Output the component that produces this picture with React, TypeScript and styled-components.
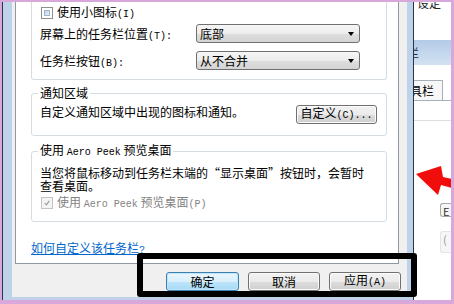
import * as React from 'react';
import styled, { createGlobalStyle } from 'styled-components';

const cjkFont = '"Noto Sans CJK SC", "Noto Sans", sans-serif';

const frameBlue = '#bed3ea';
const groupBorder = '#d5dde3';

const GlobalStyle = createGlobalStyle`
	html, body {
		margin: 0;
		padding: 0;
		background: #fff;
	}
	body {
		font-family: ${cjkFont};
		font-size: 12px;
		color: #000;
	}
`;

const Screen = styled.div`
	position: relative;
	box-sizing: border-box;
	width: 454px;
	height: 304px;
	display: flex;
	border-style: solid;
	border-color: #d8a8da;
	border-width: 2px 3px 4px 2px;
	overflow: hidden;
	background: #fff;
`;

const DialogWindow = styled.div`
	box-sizing: border-box;
	flex: none;
	width: 412px;
	display: flex;
	padding: 0 6px 3px 9px;
	background: ${frameBlue};
	border-left: 1px solid #283546;
	border-right: 1px solid #283546;
`;

const DialogBody = styled.div`
	flex: 1;
	display: flex;
	flex-direction: column;
	padding: 0 6px 0 3px;
	background: #f0f0f0;
`;

const TabPage = styled.div`
	box-sizing: border-box;
	height: 262px;
	margin-right: 2px;
	padding: 0 11px 0 15px;
	display: flex;
	flex-direction: column;
	background: #fff;
	border: 1px solid #8e99a5;
	border-top: none;
`;

const ClippedGroup = styled.div`
	display: flex;
	flex-direction: column;
	padding: 4px 9px 9px 8px;
	border: 1px solid ${groupBorder};
	border-top: none;
	border-radius: 0 0 3px 3px;
`;

const Group = styled.fieldset<{ $gap: number }>`
	margin: ${(p) => p.$gap}px 0 0;
	padding: 6px 9px 11px 8px;
	min-inline-size: 0;
	border: 1px solid ${groupBorder};
	border-radius: 3px;
`;

const Legend = styled.legend`
	margin-left: -2px;
	padding: 0 2px;
	line-height: 12px;
	font-size: 12px;
`;

const Latin = styled.span`
	font-family: "Liberation Mono", "DejaVu Sans Mono", monospace;
	font-size: 10px;
`;

const CheckRow = styled.div<{ $top?: number }>`
	display: flex;
	align-items: center;
	gap: 4px;
	height: 14px;
	margin-top: ${(p) => p.$top ?? 0}px;
	padding-left: 1px;
`;

const CheckBox = styled.span<{ $disabled?: boolean }>`
	box-sizing: border-box;
	flex: none;
	width: 12px;
	height: 12px;
	padding: 2px;
	display: flex;
	align-items: center;
	justify-content: center;
	background: ${(p) => (p.$disabled ? '#f4f4f4' : '#fff')};
	border: 1px solid ${(p) => (p.$disabled ? '#c4c4c4' : '#8e8f8f')};
`;

const CheckFill = styled.span`
	display: block;
	width: 100%;
	height: 100%;
	box-sizing: border-box;
	border: 1px solid #9fb6cf;
	background: linear-gradient(135deg, #bcd0e6 0%, #e9f1fa 100%);
`;

const CheckText = styled.span<{ $disabled?: boolean }>`
	line-height: 12px;
	white-space: nowrap;
	color: ${(p) => (p.$disabled ? '#838383' : '#000')};
`;

const FieldRow = styled.div<{ $top: number }>`
	display: flex;
	align-items: center;
	height: 19px;
	margin-top: ${(p) => p.$top}px;
`;

const FieldLabel = styled.span`
	flex: none;
	width: 156px;
	white-space: nowrap;
`;

const Select = styled.div`
	box-sizing: border-box;
	width: 164px;
	height: 19px;
	display: flex;
	align-items: center;
	justify-content: space-between;
	padding: 0 5px 0 3px;
	border: 1px solid #707070;
	border-radius: 3px;
	background: linear-gradient(#f6f6f6 0%, #ececec 50%, #dedede 51%, #d4d4d4 100%);
`;

const Caret = styled.span`
	width: 0;
	height: 0;
	border-left: 3px solid transparent;
	border-right: 3px solid transparent;
	border-top: 4px solid #000;
`;

const NotifyRow = styled.div`
	display: flex;
	align-items: flex-start;
	justify-content: space-between;
	height: 19px;
`;

const BodyText = styled.p<{ $leading?: number }>`
	margin: 1px 0 0;
	line-height: ${(p) => p.$leading ?? 12}px;
	white-space: nowrap;
`;

const PushButton = styled.button<{ $width: number; $default?: boolean }>`
	box-sizing: border-box;
	flex: none;
	width: ${(p) => p.$width}px;
	height: 19px;
	padding: 0;
	font-family: ${cjkFont};
	font-size: 12px;
	line-height: 12px;
	color: #000;
	border: 1px solid ${(p) => (p.$default ? '#3c7fb1' : '#707070')};
	border-radius: 3px;
	box-shadow: inset 0 0 0 1px ${(p) => (p.$default ? '#bfe6fa' : '#fbfbfb')};
	background: ${(p) =>
		p.$default
			? 'linear-gradient(#eaf6fd 0%, #d9f0fc 50%, #bee6fd 51%, #a7d9f5 100%)'
			: 'linear-gradient(#f2f2f2 0%, #ebebeb 50%, #dddddd 51%, #cfcfcf 100%)'};
`;

const HelpLink = styled.a`
	align-self: flex-start;
	margin-top: 20px;
	line-height: 12px;
	color: #0066cc;
	text-decoration: underline;
	white-space: nowrap;
`;

const ButtonRow = styled.div`
	display: flex;
	justify-content: flex-end;
	gap: 9px;
	padding-top: 8px;
`;

const BackgroundWindow = styled.div`
	flex: 1;
	display: flex;
	flex-direction: column;
	overflow: hidden;
	background: #fff;
`;

const TitleClip = styled.div`
	height: 9px;
	overflow: hidden;
	padding-left: 3px;
	line-height: 12px;
	color: #222;
`;

const TitleText = styled.div`
	margin-top: -5px;
	white-space: nowrap;
`;

const HeaderBar = styled.div`
	height: 25px;
	margin-top: 29px;
	display: flex;
	align-items: center;
	background: linear-gradient(#b3cbe7, #d3e2f2);
	color: #1f2a38;
	white-space: nowrap;
`;

const ClippedGlyph = styled.span<{ $shift: number }>`
	margin-left: ${(p) => p.$shift}px;
`;

const TabStrip = styled.div`
	height: 20px;
	margin-top: 15px;
	display: flex;
	border-bottom: 1px solid #a7b0ba;
`;

const BackTab = styled.div`
	display: flex;
	align-items: center;
	width: 28px;
	overflow: hidden;
	white-space: nowrap;
	background: #f7f7f7;
	border: 1px solid #a7b0ba;
	border-left: none;
	border-bottom: none;
`;

const Rule = styled.div`
	height: 1px;
	margin-top: 19px;
	background: #dedede;
`;

const GhostBox = styled.div<{ $top: number; $height: number; $faint?: boolean }>`
	box-sizing: border-box;
	width: 12px;
	height: ${(p) => p.$height}px;
	margin: ${(p) => p.$top}px 0 0 26px;
	border: 1px solid ${(p) => (p.$faint ? '#e4e4e4' : '#a8a8a8')};
	border-right: none;
	border-radius: 3px 0 0 3px;
	background: #f6f6f6;
	font-size: 11px;
	line-height: 14px;
	padding-left: 2px;
	color: ${(p) => (p.$faint ? '#9a9a9a' : '#333')};
	overflow: hidden;
`;

const Highlight = styled.div`
	position: absolute;
	left: 135px;
	top: 251px;
	box-sizing: border-box;
	width: 280px;
	height: 44px;
	border: 6px solid #000;
	border-radius: 3px;
`;

const Arrow = styled.svg`
	position: absolute;
	left: 412px;
	top: 158px;
`;

const CheckMark: React.FC = () => (
	<svg width="8" height="8" viewBox="0 0 8 8">
		<path d="M1 4.2 L3.2 6.4 L7 1.2" fill="none" stroke="#9c9c9c" strokeWidth="1.6" />
	</svg>
);

export default function App() {
	return (
		<>
			<GlobalStyle />
			<Screen>
				<DialogWindow>
					<DialogBody>
						<TabPage>
							<ClippedGroup>
								<CheckRow>
									<CheckBox><CheckFill /></CheckBox>
									<CheckText>使用小图标<Latin>(I)</Latin></CheckText>
								</CheckRow>
								<FieldRow $top={4}>
									<FieldLabel>屏幕上的任务栏位置<Latin>(T):</Latin></FieldLabel>
									<Select>
										<span>底部</span>
										<Caret />
									</Select>
								</FieldRow>
								<FieldRow $top={8}>
									<FieldLabel>任务栏按钮<Latin>(B):</Latin></FieldLabel>
									<Select>
										<span>从不合并</span>
										<Caret />
									</Select>
								</FieldRow>
							</ClippedGroup>

							<Group $gap={7}>
								<Legend>通知区域</Legend>
								<NotifyRow>
									<BodyText>自定义通知区域中出现的图标和通知。</BodyText>
									<PushButton $width={81}>自定义<Latin>(C)...</Latin></PushButton>
								</NotifyRow>
							</Group>

							<Group $gap={8}>
								<Legend>使用 <Latin>Aero Peek</Latin> 预览桌面</Legend>
								<BodyText as="div" $leading={13}>
									当您将鼠标移动到任务栏末端的“显示桌面”按钮时，会暂时
									<br />
									查看桌面。
								</BodyText>
								<CheckRow $top={4}>
									<CheckBox $disabled><CheckMark /></CheckBox>
									<CheckText $disabled>使用 <Latin>Aero Peek</Latin> 预览桌面<Latin>(P)</Latin></CheckText>
								</CheckRow>
							</Group>

							<HelpLink href="#">如何自定义该任务栏<Latin>?</Latin></HelpLink>
						</TabPage>

						<ButtonRow>
							<PushButton $width={73} $default>确定</PushButton>
							<PushButton $width={72}>取消</PushButton>
							<PushButton $width={72}>应用<Latin>(A)</Latin></PushButton>
						</ButtonRow>
					</DialogBody>
				</DialogWindow>

				<BackgroundWindow>
					<TitleClip>
						<TitleText>设定</TitleText>
					</TitleClip>
					<HeaderBar>
						<ClippedGlyph $shift={-7}>栏</ClippedGlyph>
					</HeaderBar>
					<TabStrip>
						<BackTab>
							<ClippedGlyph $shift={-4}>具栏</ClippedGlyph>
						</BackTab>
					</TabStrip>
					<Rule />
					<GhostBox $top={82} $height={14}>E</GhostBox>
					<GhostBox $top={14} $height={22} $faint>(</GhostBox>
				</BackgroundWindow>

				<Highlight />
				<Arrow width="42" height="40" viewBox="0 0 42 40">
					<polygon points="2,14 27,6 29,17 42,20 42,29 27,25 24,35" fill="#f20d0d" />
				</Arrow>
			</Screen>
		</>
	);
}
